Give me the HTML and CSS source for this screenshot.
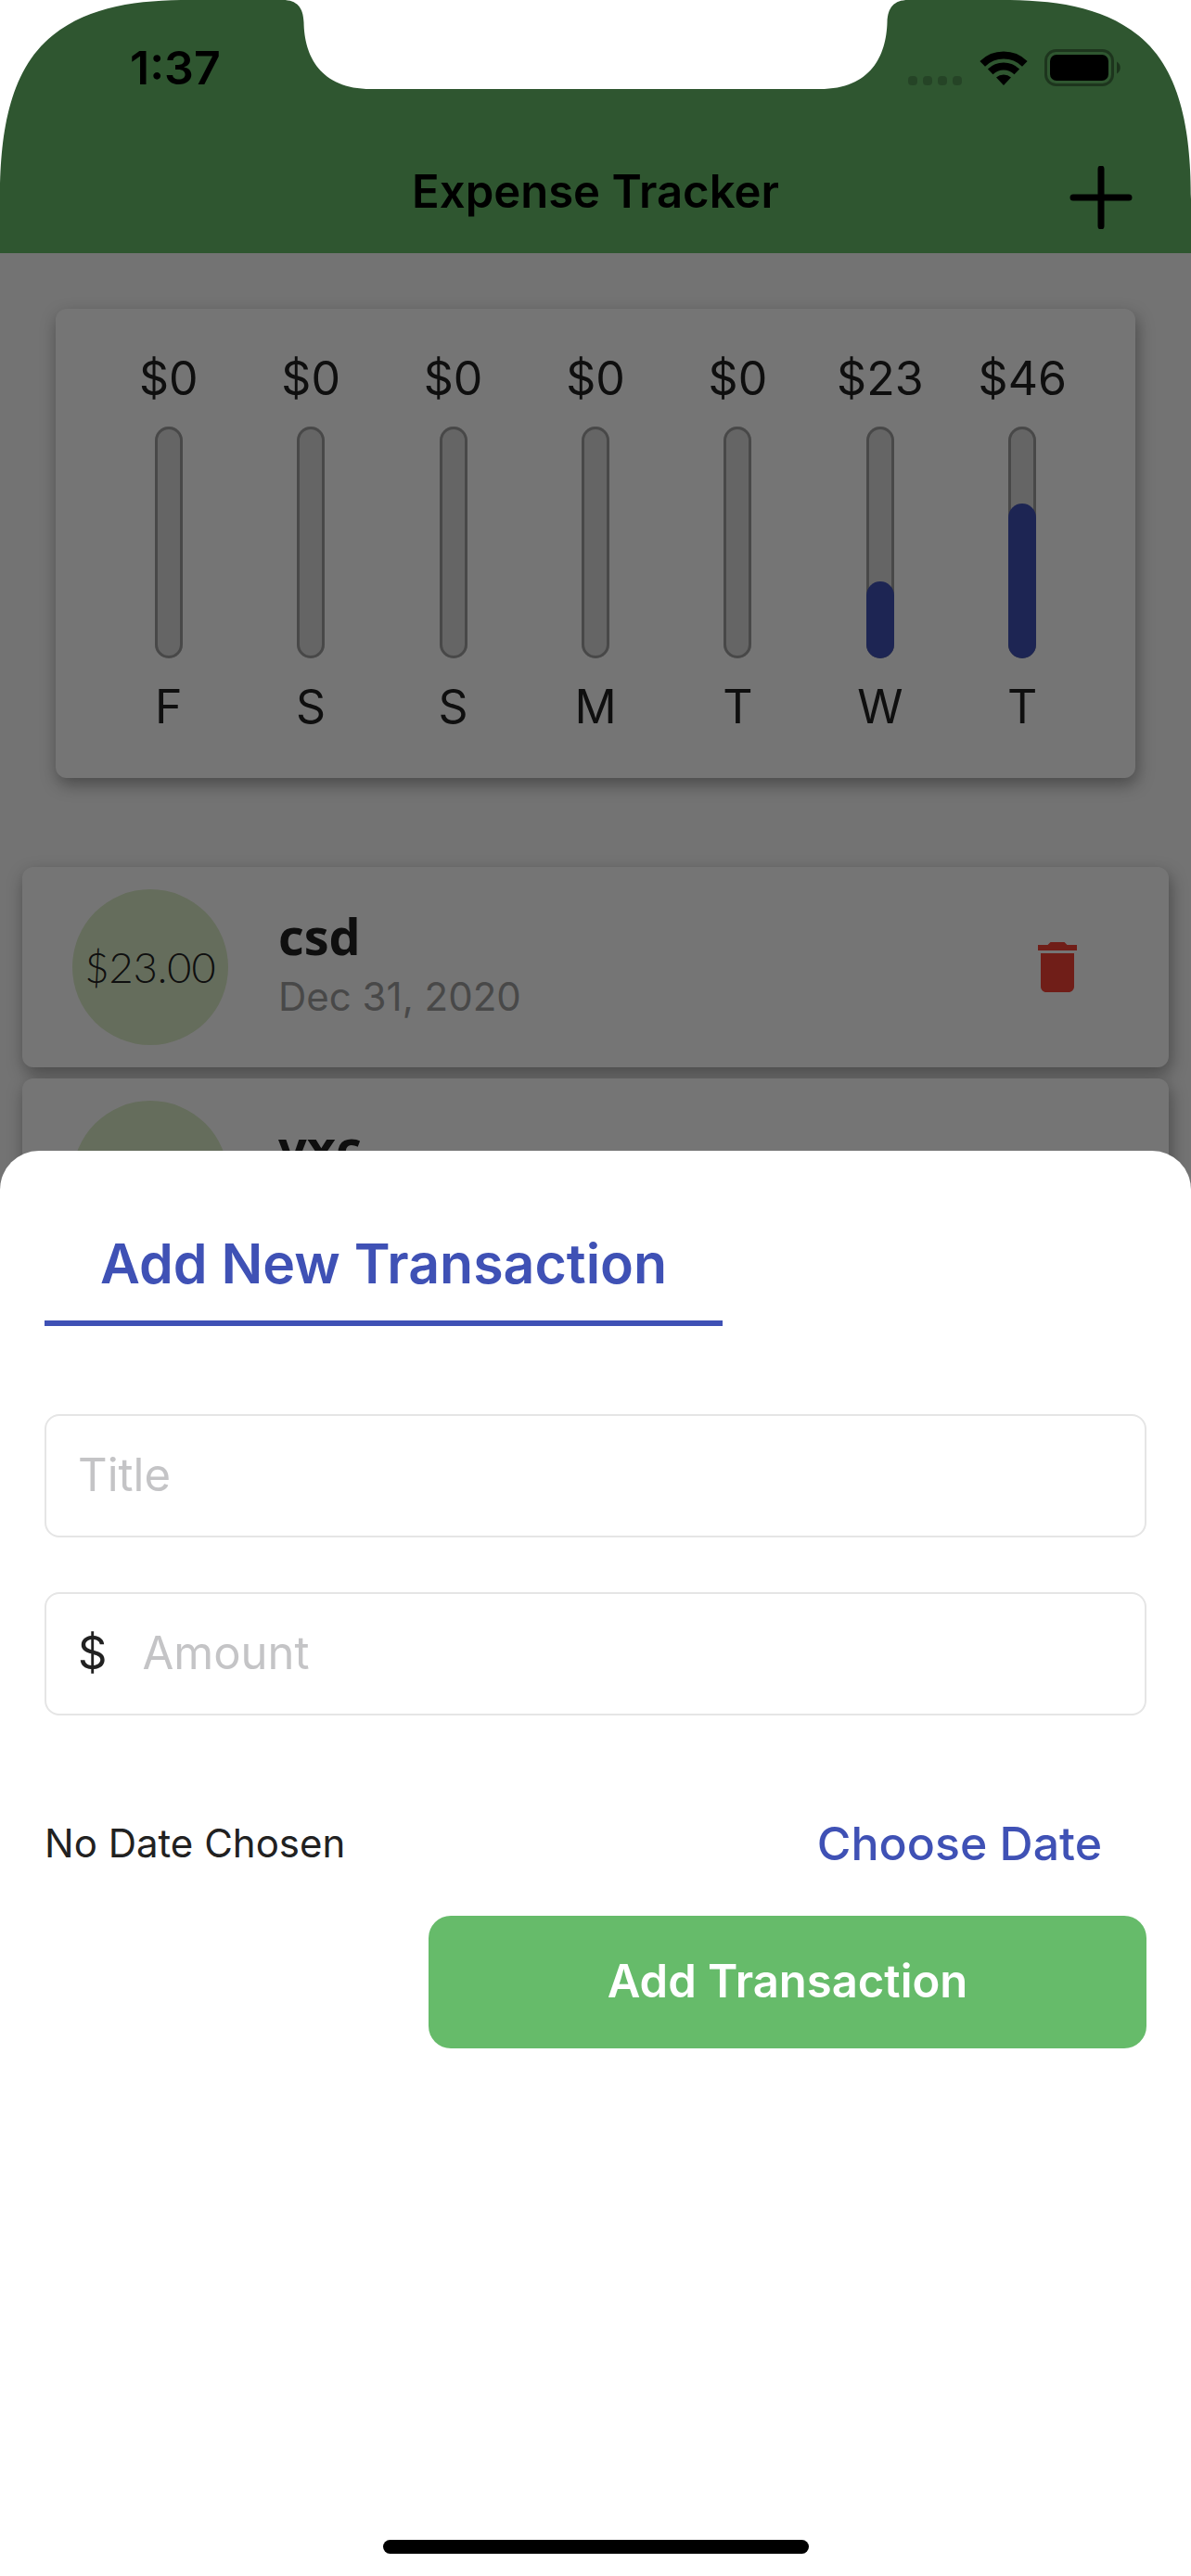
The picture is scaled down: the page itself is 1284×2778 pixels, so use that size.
FILE: index.html
```html
<!DOCTYPE html>
<html lang="en">
<head>
<meta charset="utf-8">
<meta name="viewport" content="width=device-width, initial-scale=1">
<title>Expense Tracker</title>
<link rel="stylesheet" href="styles.css">
</head>
<body>
<div class="app">
  <header class="app-header">
    <h1 class="app-title">Expense Tracker</h1>
    <button class="icon-button add-button" type="button" aria-label="Add expense">
      <svg width="68" height="68" viewBox="0 0 68 68"><path d="M34 3v62M4 34h60" stroke="#000" stroke-width="7" stroke-linecap="round"/></svg>
    </button>
  </header>
  <main class="app-body">
    <section class="card chart" aria-label="Spending this week">
      <div class="chart-day"><span class="chart-label">$0</span><div class="bar"></div><span class="chart-label">F</span></div>
      <div class="chart-day"><span class="chart-label">$0</span><div class="bar"></div><span class="chart-label">S</span></div>
      <div class="chart-day"><span class="chart-label">$0</span><div class="bar"></div><span class="chart-label">S</span></div>
      <div class="chart-day"><span class="chart-label">$0</span><div class="bar"></div><span class="chart-label">M</span></div>
      <div class="chart-day"><span class="chart-label">$0</span><div class="bar"></div><span class="chart-label">T</span></div>
      <div class="chart-day"><span class="chart-label">$23</span><div class="bar"><div class="bar-fill" style="height: 33.3%"></div></div><span class="chart-label">W</span></div>
      <div class="chart-day"><span class="chart-label">$46</span><div class="bar"><div class="bar-fill" style="height: 66.7%"></div></div><span class="chart-label">T</span></div>
    </section>
    <ul class="transactions">
      <li class="card transaction">
        <span class="amount">$23.00</span>
        <div class="details"><h2 class="name">csd</h2><p class="date">Dec 31, 2020</p></div>
        <button class="icon-button" type="button" aria-label="Delete csd">
          <svg width="72" height="72" viewBox="0 0 24 24" fill="#f44336"><path d="M6 19c0 1.1.9 2 2 2h8c1.1 0 2-.9 2-2V7H6v12zM19 4h-3.500l-1-1h-5l-1 1H5v2h14V4z"/></svg>
        </button>
      </li>
      <li class="card transaction">
        <span class="amount"></span>
        <div class="details"><h2 class="name">vxc</h2></div>
      </li>
    </ul>
  </main>
</div>

<div class="scrim">
  <section class="sheet" role="dialog" aria-labelledby="sheet-title">
    <form class="form">
      <h2 class="sheet-title" id="sheet-title">Add New Transaction</h2>
      <label class="field"><input class="field-input" type="text" placeholder="Title" aria-label="Title"></label>
      <label class="field"><span class="prefix">$</span><input class="field-input" type="text" inputmode="decimal" placeholder="Amount" aria-label="Amount"></label>
      <div class="date-row">
        <span class="date-status">No Date Chosen</span>
        <button class="choose-date" type="button">Choose Date</button>
      </div>
      <button class="submit" type="submit">Add Transaction</button>
    </form>
    <div class="home-indicator"></div>
  </section>
</div>

<div class="status-bar">
  <span class="clock">1:37</span>
  <div class="status-icons">
    <svg width="60" height="12" viewBox="0 0 60 12" fill="#000" opacity=".2"><rect x="1" y="1" width="10" height="10" rx="4"/><rect x="17" y="1" width="10" height="10" rx="4"/><rect x="33" y="1" width="10" height="10" rx="4"/><rect x="49" y="1" width="10" height="10" rx="4"/></svg>
    <svg width="52" height="38" viewBox="0 0 52 38" fill="none" stroke="#000" stroke-width="8"><path d="M3.200 13.800a32.500 32.500 0 0 1 45.600 0"/><path d="M11.700 22.300a20.500 20.500 0 0 1 28.600 0"/><path d="M26 37l-8-8.500a12 12 0 0 1 16 0z" fill="#000" stroke="none"/></svg>
    <svg width="83" height="40" viewBox="0 0 83 40"><rect x="1.500" y="1.500" width="72" height="37" rx="11" fill="none" stroke="#000" stroke-opacity=".38" stroke-width="3"/><rect x="6" y="6" width="63" height="28" rx="7"/><path d="M78 13.500c5 2.500 5 10.500 0 13z" opacity=".42"/></svg>
  </div>
</div>

<div class="bezel" aria-hidden="true">
  <svg width="206" height="216" viewBox="0 0 206 216" fill="#fff"><path d="M0 0H205C150 0 97 6 57 38C8 77 0 150 0 215z"/></svg>
  <svg width="674" height="97" viewBox="305 0 674 97" fill="#fff"><path d="M305 0C320 0 327 8 327.500 24C328 60 345 96 400 96H884C939 96 955.500 60 956.500 24C957 8 964 0 979 0z"/></svg>
  <svg width="206" height="216" viewBox="0 0 206 216" fill="#fff"><path d="M206 0H1C56 0 109 6 149 38C198 77 206 150 206 215z"/></svg>
</div>
</body>
</html>
```
FILE: styles.css
```css
* {
  box-sizing: border-box;
}

body {
  margin: 0;
  background: #fff;
  color: #212121;
  font-family: Inter, "Liberation Sans", sans-serif;
  font-size: 50px;
  line-height: 60px;
}

h1, h2, p, ul {
  margin: 0;
  padding: 0;
}

svg {
  display: block;
}

button {
  border: 0;
  background: none;
  padding: 0;
  color: inherit;
  font: inherit;
}

.app {
  height: 100vh;
  overflow: hidden;
  background: #fafafa;
}

.app-header {
  display: grid;
  grid-template-columns: 1fr auto 1fr;
  align-items: center;
  height: 273px;
  padding: 153px 63px 0;
  background: #66bb6a;
  color: #000;
}

.app-title {
  grid-column: 2;
  font-size: 49px;
  font-weight: 600;
  padding-bottom: 12px;
}

.add-button {
  justify-self: end;
}

.app-body {
  padding: 60px 24px;
}

.card {
  border-radius: 12px;
  background: #fff;
  box-shadow: 2px 7px 18px rgba(0, 0, 0, 0.36);
}

.chart {
  display: flex;
  margin: 0 36px 96px;
  padding: 45px 45px 47px;
}

.chart-day {
  flex: 1;
  display: flex;
  flex-direction: column;
  align-items: center;
  gap: 22px;
}

.bar {
  display: flex;
  flex-direction: column;
  justify-content: flex-end;
  width: 30px;
  height: 250px;
  border-radius: 15px;
  background: #dcdcdc;
  box-shadow: inset 0 0 0 3px #9e9e9e;
}

.bar-fill {
  border-radius: 15px;
  background: #3f51b5;
}

.transactions {
  display: grid;
  gap: 12px;
  list-style: none;
}

.transaction {
  display: flex;
  align-items: center;
  gap: 54px;
  min-height: 216px;
  padding: 24px 84px 24px 54px;
}

.amount {
  display: flex;
  align-items: center;
  justify-content: center;
  width: 168px;
  height: 168px;
  border-radius: 50%;
  background: #dcedc8;
  font-family: Lato, "Liberation Sans", sans-serif;
  font-size: 45px;
  font-weight: 300;
}

.details {
  flex: 1;
  min-height: 140px;
}

.name {
  font-family: "Open Sans", "Noto Sans", sans-serif;
  font-size: 54px;
  font-weight: 700;
  line-height: 72px;
}

.date {
  color: #9e9e9e;
  font-size: 42px;
}

.scrim {
  position: fixed;
  inset: 0;
  display: flex;
  flex-direction: column;
  justify-content: flex-end;
  background: rgba(0, 0, 0, 0.54);
}

.sheet {
  display: flex;
  flex-direction: column;
  justify-content: space-between;
  min-height: 55.33%;
  padding: 84px 48px 24px;
  border-radius: 42px 42px 0 0;
  background: #fff;
}

.form {
  display: flex;
  flex-direction: column;
}

.sheet-title {
  align-self: flex-start;
  margin-bottom: 95px;
  padding: 0 60px 24px;
  border-bottom: 6px solid #3f51b5;
  color: #3f51b5;
  font-size: 59px;
  font-weight: 600;
  line-height: 75px;
}

.field {
  display: flex;
  align-items: center;
  gap: 38px;
  height: 133px;
  margin-bottom: 59px;
  padding: 0 34px;
  border: 2px solid #e5e5e5;
  border-radius: 16px;
  font-size: 49px;
}

.field-input {
  flex: 1;
  min-width: 0;
  padding: 0;
  border: 0;
  outline: 0;
  background: none;
  color: inherit;
  font: inherit;
}

.field-input::placeholder {
  color: #c4c4c6;
  opacity: 1;
}

.date-row {
  display: flex;
  align-items: center;
  justify-content: space-between;
  margin: 49px 0 48px;
  padding-right: 48px;
}

.date-status {
  font-size: 42px;
}

.choose-date {
  color: #3f51b5;
  font-weight: 500;
}

.submit {
  align-self: flex-end;
  width: 774px;
  max-width: 100%;
  height: 143px;
  border-radius: 24px;
  background: #66bb6a;
  color: #fff;
  font-size: 49px;
  font-weight: 600;
}

.home-indicator {
  align-self: center;
  width: 459px;
  height: 15px;
  border-radius: 8px;
  background: #000;
}

.status-bar {
  position: absolute;
  inset: 0 0 auto;
  display: flex;
  align-items: center;
  justify-content: space-between;
  padding: 43px 75px 0 140px;
  color: #000;
}

.clock {
  font-weight: 600;
}

.status-icons {
  display: flex;
  align-items: flex-end;
  gap: 18px;
}

.bezel {
  position: absolute;
  inset: 0 0 auto;
  display: flex;
  align-items: flex-start;
  justify-content: space-between;
  pointer-events: none;
}
```
